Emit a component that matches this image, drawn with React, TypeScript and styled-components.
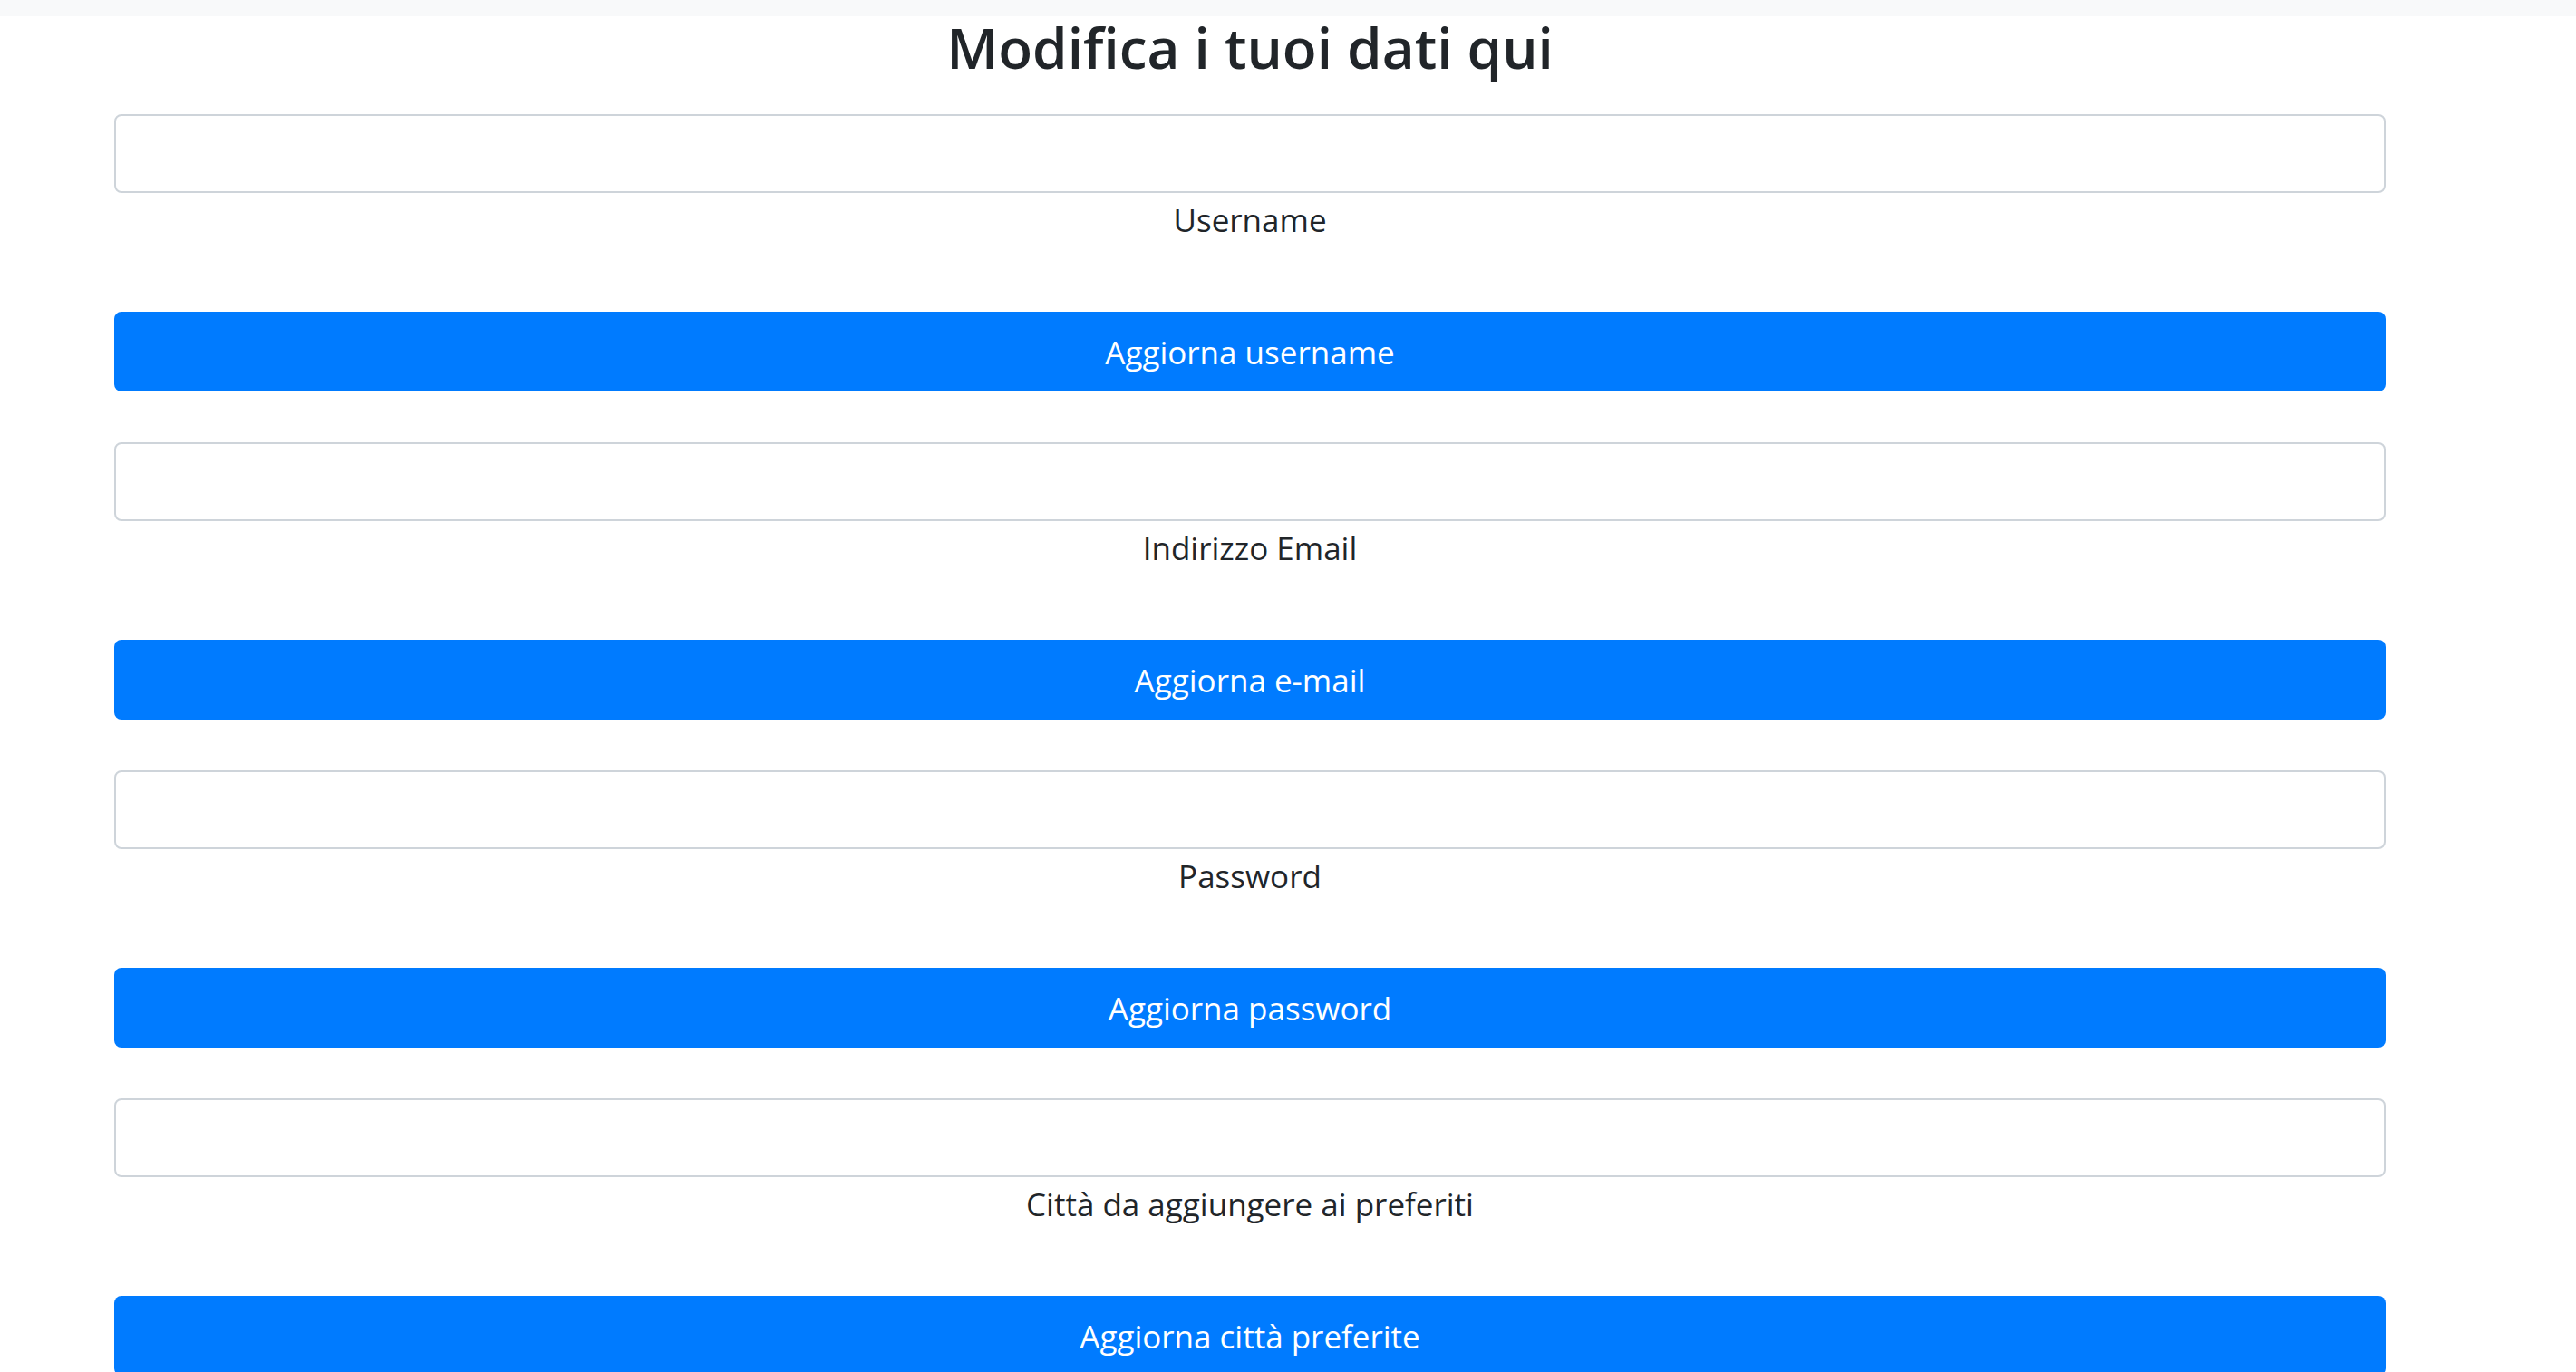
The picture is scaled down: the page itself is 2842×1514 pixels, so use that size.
import React from "react";
import styled, { createGlobalStyle } from "styled-components";

const GlobalStyle = createGlobalStyle`
  html, body {
    margin: 0;
    padding: 0;
    background: #ffffff;
    font-family: "Open Sans", "Noto Sans", sans-serif;
    color: #212529;
  }
`;

const TopBar = styled.div`
  height: 18px;
  background: #f8f9fa;
`;

const Page = styled.main`
  padding-left: 126px;
  width: 2506px;
`;

const Title = styled.h2`
  margin: 0;
  text-align: center;
  font-size: 62px;
  font-weight: 600;
  line-height: 68px;
  color: #212529;
`;

const Form = styled.form`
  display: flex;
  flex-direction: column;
  padding-top: 40px;
`;

const Field = styled.div`
  display: flex;
  flex-direction: column;
  margin-bottom: 56px;
`;

const Input = styled.input`
  box-sizing: border-box;
  height: 87px;
  width: 100%;
  border: 2px solid #ced4da;
  border-radius: 8px;
  background: #fff;
  font-family: inherit;
  font-size: 35px;
  padding: 0 28px;
  outline: none;
`;

const Label = styled.label`
  text-align: center;
  font-size: 35px;
  line-height: 54px;
  padding-top: 3px;
  margin-bottom: 74px;
  color: #212529;
`;

const SubmitButton = styled.button`
  box-sizing: border-box;
  height: 88px;
  width: 100%;
  border: none;
  border-radius: 8px;
  background: #007bff;
  color: #ffffff;
  font-family: inherit;
  font-size: 35px;
  padding: 0;
  cursor: pointer;
`;

const fields = [
  { id: "username", label: "Username", type: "text", action: "Aggiorna username" },
  { id: "email", label: "Indirizzo Email", type: "email", action: "Aggiorna e-mail" },
  { id: "password", label: "Password", type: "password", action: "Aggiorna password" },
  { id: "citta", label: "Città da aggiungere ai preferiti", type: "text", action: "Aggiorna città preferite" },
];

const App: React.FC = () => {
  return (
    <>
      <GlobalStyle />
      <TopBar />
      <Page>
        <Title>Modifica i tuoi dati qui</Title>
        <Form onSubmit={(e) => e.preventDefault()}>
          {fields.map((f) => (
            <Field key={f.id}>
              <Input id={f.id} type={f.type} />
              <Label htmlFor={f.id}>{f.label}</Label>
              <SubmitButton type="submit">{f.action}</SubmitButton>
            </Field>
          ))}
        </Form>
      </Page>
    </>
  );
};

export default App;
